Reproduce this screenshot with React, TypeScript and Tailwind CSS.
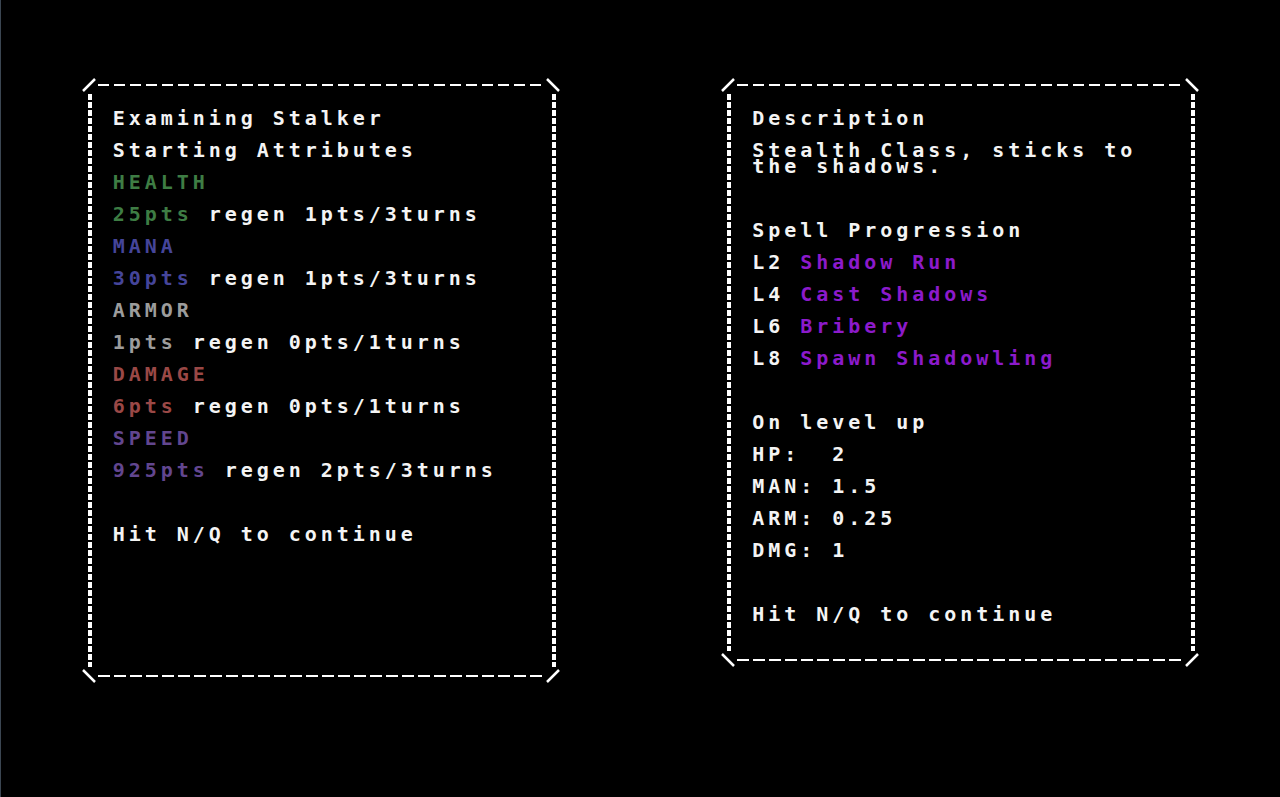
import React from "react";

type Seg = { text: string; color?: string };
type Line = Seg[] | null;

const WHITE = "text-[#f4f4f4]";

const LEFT_LINES: Line[] = [
  [{ text: "Examining Stalker" }],
  [{ text: "Starting Attributes" }],
  [{ text: "HEALTH", color: "text-[#3e7d44]" }],
  [{ text: "25pts", color: "text-[#3e7d44]" }, { text: " regen 1pts/3turns" }],
  [{ text: "MANA", color: "text-[#45459a]" }],
  [{ text: "30pts", color: "text-[#45459a]" }, { text: " regen 1pts/3turns" }],
  [{ text: "ARMOR", color: "text-[#9c9c9c]" }],
  [{ text: "1pts", color: "text-[#9c9c9c]" }, { text: " regen 0pts/1turns" }],
  [{ text: "DAMAGE", color: "text-[#9a4846]" }],
  [{ text: "6pts", color: "text-[#9a4846]" }, { text: " regen 0pts/1turns" }],
  [{ text: "SPEED", color: "text-[#62468f]" }],
  [{ text: "925pts", color: "text-[#62468f]" }, { text: " regen 2pts/3turns" }],
  null,
  [{ text: "Hit N/Q to continue" }],
];

const SPELL = "text-[#8c1acb]";

const RIGHT_LINES: Line[] = [
  [{ text: "Description" }],
  [{ text: "Stealth Class, sticks to the shadows." }],
  null,
  [{ text: "Spell Progression" }],
  [{ text: "L2 " }, { text: "Shadow Run", color: SPELL }],
  [{ text: "L4 " }, { text: "Cast Shadows", color: SPELL }],
  [{ text: "L6 " }, { text: "Bribery", color: SPELL }],
  [{ text: "L8 " }, { text: "Spawn Shadowling", color: SPELL }],
  null,
  [{ text: "On level up" }],
  [{ text: "HP:  2" }],
  [{ text: "MAN: 1.5" }],
  [{ text: "ARM: 0.25" }],
  [{ text: "DMG: 1" }],
  null,
  [{ text: "Hit N/Q to continue" }],
];

function Frame({ height }: { height: number }) {
  const w = 478;
  const h = height;
  return (
    <svg
      className="pointer-events-none absolute left-0 top-0"
      width={w}
      height={h}
      viewBox={`0 0 ${w} ${h}`}
      shapeRendering="crispEdges"
      aria-hidden
    >
      <g stroke="#ffffff" fill="none">
        {/* corners */}
        <line x1={1} y1={13} x2={13} y2={1} strokeWidth={2.5} shapeRendering="auto" />
        <line x1={465} y1={1} x2={477} y2={13} strokeWidth={2.5} shapeRendering="auto" />
        <line x1={1} y1={h - 13} x2={13} y2={h - 1} strokeWidth={2.5} shapeRendering="auto" />
        <line x1={465} y1={h - 1} x2={477} y2={h - 13} strokeWidth={2.5} shapeRendering="auto" />
        {/* top + bottom */}
        <line x1={16} y1={7} x2={462} y2={7} strokeWidth={2} strokeDasharray="11 5" />
        <line x1={16} y1={h - 7} x2={462} y2={h - 7} strokeWidth={2} strokeDasharray="12 4" />
        {/* sides */}
        <line x1={8} y1={16} x2={8} y2={h - 16} strokeWidth={4} strokeDasharray="6 2" />
        <line x1={472} y1={16} x2={472} y2={h - 16} strokeWidth={4} strokeDasharray="6 2" />
      </g>
    </svg>
  );
}

function Panel({ lines, height }: { lines: Line[]; height: number }) {
  return (
    <div className="relative w-[478px] pl-[31px] pr-8 pt-8" style={{ height }}>
      <Frame height={height} />
      <div className="flex flex-col gap-4 font-['DejaVu_Sans_Mono',monospace] text-[20px] font-bold leading-4 tracking-[3.96px]">
        {lines.map((line, i) =>
          line ? (
            <div key={i} className={`whitespace-pre-wrap ${WHITE}`}>
              {line.map((seg, j) => (
                <span key={j} className={seg.color ?? WHITE}>
                  {seg.text}
                </span>
              ))}
            </div>
          ) : (
            <div key={i} className="h-4" />
          )
        )}
      </div>
    </div>
  );
}

export default function App() {
  return (
    <div className="flex h-[797px] w-full border-l border-[#3b4652] bg-black">
      <div className="flex flex-1 justify-center pt-[78px]">
        <Panel lines={LEFT_LINES} height={605} />
      </div>
      <div className="flex flex-1 justify-center pt-[78px]">
        <Panel lines={RIGHT_LINES} height={589} />
      </div>
    </div>
  );
}
